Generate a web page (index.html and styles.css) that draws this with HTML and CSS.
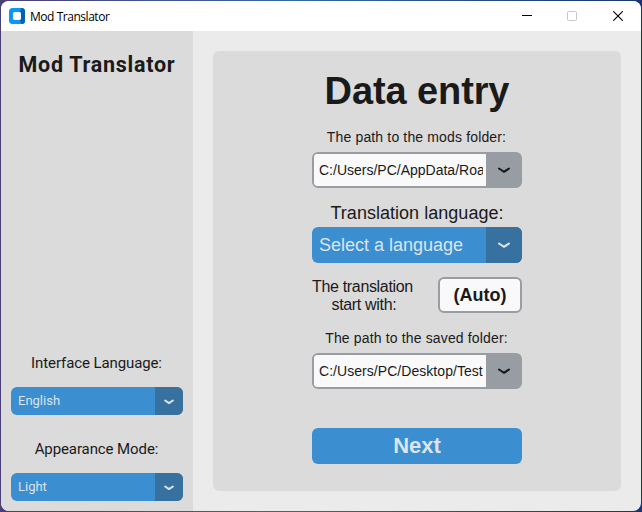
FILE: index.html
```html
<!DOCTYPE html>
<html lang="en">
<head>
<meta charset="utf-8">
<title>Mod Translator</title>
<link rel="stylesheet" href="styles.css">
</head>
<body>
<div class="window">
  <header class="titlebar">
    <svg class="logo" width="16" height="16" viewBox="0 0 16 16"><rect width="16" height="16" rx="3.500" fill="#0a97f5"/><path d="M12.500 0a3.500 3.500 0 0 1 3.500 3.500v9a3.500 3.500 0 0 1-3.500 3.500L11 12.500l1-1V4.500L11 3.500z" fill="#0561ae"/><rect x="4" y="4" width="8" height="8" rx="1.800" fill="#fff"/></svg>
    <span class="app-name">Mod Translator</span>
    <div class="controls">
      <svg width="10" height="10" viewBox="0 0 10 10"><path d="M0 4.500h10" stroke="#000"/></svg>
      <svg width="10" height="10" viewBox="0 0 10 10"><rect x=".5" y=".5" width="9" height="9" rx="1" fill="none" stroke="#c8c8c8"/></svg>
      <svg width="10" height="10" viewBox="0 0 10 10"><path d="M.3.300l9.400 9.400M9.700.300L.3 9.700" stroke="#000" stroke-width="1.100"/></svg>
    </div>
  </header>
  <div class="body">
    <aside class="sidebar">
      <h2 class="brand">Mod Translator</h2>
      <div class="settings">
        <div class="side-label interface">Interface Language:</div>
        <div class="select small"><span class="value">English</span><span class="arrow"><svg width="10" height="6" viewBox="0 0 10 6"><path d="M1.200 1.500L4 3.500L5 4L6 3.500L8.800 1.500"/></svg></span></div>
        <div class="side-label appearance">Appearance Mode:</div>
        <div class="select small"><span class="value">Light</span><span class="arrow"><svg width="10" height="6" viewBox="0 0 10 6"><path d="M1.200 1.500L4 3.500L5 4L6 3.500L8.800 1.500"/></svg></span></div>
      </div>
    </aside>
    <main class="card">
      <h1 class="heading"><span>Data entry</span></h1>
      <div class="path-label mods">The path to the mods folder:</div>
      <div class="combo"><span class="value">C:/Users/PC/AppData/Roa</span><span class="arrow"><svg width="12" height="7" viewBox="0 0 12 7"><path d="M1 1.500L4 3.500L6 4.800L8 3.500L11 1.500"/></svg></span></div>
      <div class="language-label">Translation language:</div>
      <div class="select"><span class="value">Select a language</span><span class="arrow"><svg width="12" height="7" viewBox="0 0 12 7"><path d="M1 1.500L4 3.500L6 4.800L8 3.500L11 1.500"/></svg></span></div>
      <div class="start-row">
        <div class="start-label">The translation<br><span class="second">start with:</span></div>
        <div class="auto">(Auto)</div>
      </div>
      <div class="path-label saved">The path to the saved folder:</div>
      <div class="combo"><span class="value desktop">C:/Users/PC/Desktop/Test</span><span class="arrow"><svg width="12" height="7" viewBox="0 0 12 7"><path d="M1 1.500L4 3.500L6 4.800L8 3.500L11 1.500"/></svg></span></div>
      <div class="next">Next</div>
    </main>
  </div>
</div>
</body>
</html>
```
FILE: styles.css
```css
* { box-sizing: border-box; }
body {
  margin: 0;
  padding: 1px;
  height: 512px;
  overflow: hidden;
  background: linear-gradient(90deg, #4a3f76, #35689d 45%, #17366e);
  font-family: "Liberation Sans", sans-serif;
  color: #1a1a1a;
  white-space: nowrap;
}
.window {
  height: 510px;
  border-radius: 8px;
  overflow: hidden;
  background: #ebebeb;
}
.titlebar {
  display: flex;
  align-items: center;
  height: 30px;
  padding: 0 18px 0 8px;
  background: #fff;
}
.logo { margin-right: 5px; }
.app-name {
  font: 12px "Open Sans", sans-serif;
  letter-spacing: -0.46px;
  color: #000;
}
.controls { display: flex; gap: 36px; margin-left: auto; }
.controls svg { display: block; }
.controls svg:first-child { margin-right: -1px; }
.body { display: flex; height: 480px; }
.sidebar {
  display: flex;
  flex-direction: column;
  width: 192px;
  padding: 20px 10px 10px;
  background: #dbdbdb;
  font-family: Roboto, sans-serif;
}
.brand {
  margin: 0;
  font-size: 21.5px;
  line-height: 28px;
  font-weight: 700;
  letter-spacing: 0.72px;
  text-align: center;
}
.settings { margin-top: auto; }
.side-label {
  height: 28px;
  margin-bottom: 10px;
  font-size: 15px;
  line-height: 28px;
  letter-spacing: -0.1px;
  padding-right: 1px;
  text-align: center;
}
.appearance { margin-top: 20px; }
.select {
  display: flex;
  height: 36px;
  border-radius: 6px;
  overflow: hidden;
  background: #3b8ed0;
  color: #dce4ee;
}
.select .value {
  flex: 1;
  padding-left: 7px;
  font-size: 18px;
  line-height: 36px;
}
.arrow {
  display: flex;
  align-items: center;
  justify-content: center;
  width: 36px;
  background: #36719f;
}
.arrow path {
  fill: none;
  stroke: currentColor;
  stroke-width: 2.1;
  stroke-linecap: round;
  stroke-linejoin: round;
}
.select.small { height: 28px; }
.select.small .value { font-size: 13px; line-height: 27px; }
.select.small .arrow { width: 28px; padding-top: 1px; }
.card {
  width: 408px;
  height: 440px;
  margin: 20px;
  padding: 16px 99px 0;
  border-radius: 6px;
  background: #dbdbdb;
}
.heading {
  display: flex;
  justify-content: center;
  height: 48px;
  margin: 0;
  font-size: 38px;
  line-height: 48px;
  letter-spacing: -0.1px;
}
.path-label {
  height: 28px;
  font-size: 14px;
  line-height: 28px;
  letter-spacing: 0.15px;
  padding-right: 1px;
  text-align: center;
}
.mods { margin: 8px 0 1px; }
.saved { margin: 11px 0 1px; }
.combo {
  display: flex;
  height: 36px;
  border: 2px solid #979da2;
  border-radius: 6px;
  overflow: hidden;
  background: #979da2;
}
.combo .value {
  width: 172px;
  border-left: 5px solid #f9f9fa;
  border-right: 3px solid #f9f9fa;
  overflow: hidden;
  background: #f9f9fa;
  font-size: 14px;
  line-height: 32px;
}
.combo .desktop { letter-spacing: 0.05px; }
.combo .arrow { width: 34px; padding-left: 2px; background: #979da2; }
.language-label {
  height: 28px;
  margin-top: 11px;
  font-size: 18px;
  line-height: 28px;
  letter-spacing: 0.03px;
  text-align: center;
}
.start-row {
  display: flex;
  align-items: center;
  justify-content: space-between;
  height: 36px;
  margin-top: 14px;
}
.start-label {
  padding-top: 1px;
  font-size: 16px;
  line-height: 18px;
  letter-spacing: -0.33px;
  text-align: center;
}
.second { padding-left: 3px; }
.auto {
  width: 84px;
  height: 36px;
  border: 2px solid #979da2;
  border-radius: 6px;
  background: #f9f9fa;
  font-size: 18px;
  font-weight: 700;
  line-height: 32px;
  text-align: center;
}
.next {
  height: 36px;
  margin-top: 39px;
  border-radius: 6px;
  background: #3b8ed0;
  color: #dce4ee;
  font-size: 22px;
  font-weight: 700;
  line-height: 36px;
  text-align: center;
}
```
